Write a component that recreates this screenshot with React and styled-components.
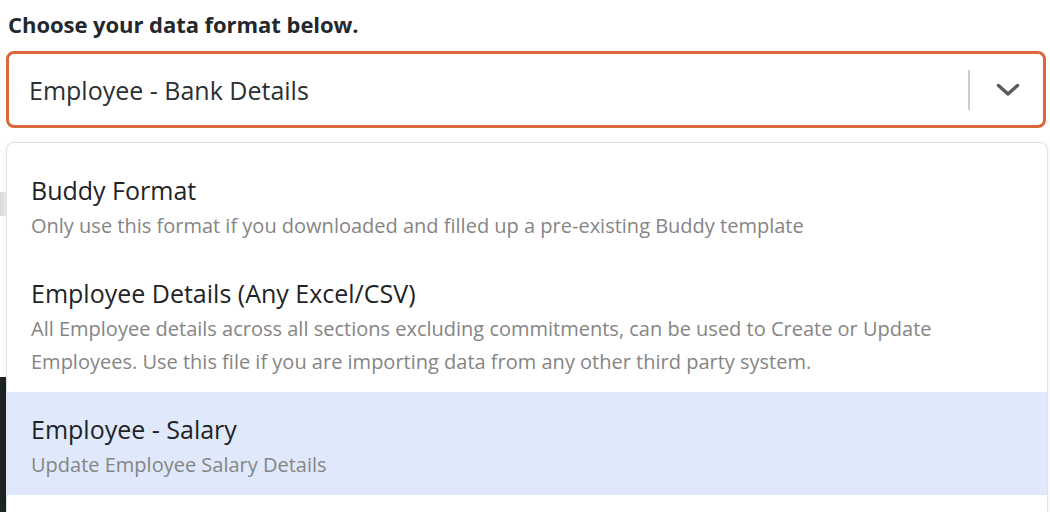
import React from 'react'
import styled, { createGlobalStyle } from 'styled-components'

const GlobalStyle = createGlobalStyle`
  html, body {
    margin: 0;
    padding: 0;
  }
  body {
    font-family: "Open Sans", "Noto Sans", sans-serif;
    background:
      linear-gradient(#1e2326, #1e2326) 0 377px / 6px 200px no-repeat,
      linear-gradient(90deg, #d9d9d9, #ededed) 0 192px / 6px 24px no-repeat,
      #fff;
    width: 1050px;
    height: 512px;
    overflow: hidden;
  }
`

const options = [
  {
    title: 'Buddy Format',
    desc: ['Only use this format if you downloaded and filled up a pre-existing Buddy template'],
  },
  {
    title: 'Employee Details (Any Excel/CSV)',
    desc: [
      'All Employee details across all sections excluding commitments, can be used to Create or Update',
      'Employees. Use this file if you are importing data from any other third party system.',
    ],
  },
  {
    title: 'Employee - Salary',
    desc: ['Update Employee Salary Details'],
    active: true,
  },
  {
    title: 'Employee - Bank Details',
    desc: ['Update Employee Bank Details'],
  },
]

const App = () => {
  return (
    <Page>
      <GlobalStyle />
      <Label>Choose your data format below.</Label>
      <Select>
        <Value>Employee - Bank Details</Value>
        <Indicators>
          <Separator />
          <Chevron viewBox="0 0 24 14">
            <path d="M2.5 2.5 L12 11 L21.5 2.5" />
          </Chevron>
        </Indicators>
      </Select>
      <Menu>
        {options.map((o) => (
          <Option key={o.title} active={o.active}>
            <OptionTitle>{o.title}</OptionTitle>
            <OptionDesc>
              {o.desc.map((line) => (
                <div key={line}>{line}</div>
              ))}
            </OptionDesc>
          </Option>
        ))}
      </Menu>
      <Scrollbar />
    </Page>
  )
}

const Page = styled.div`
  position: relative;
  padding: 10px 0 0 6px;
  width: 1042px;
  height: 502px;
  display: flex;
  flex-direction: column;
`

const Label = styled.div`
  font-weight: 700;
  font-size: 22px;
  line-height: 28px;
  letter-spacing: -0.05px;
  color: #24282c;
  padding-left: 2px;
  margin-bottom: 13px;
`

const Select = styled.div`
  flex: none;
  display: flex;
  align-items: center;
  height: 71px;
  border: 3px solid #d9693a;
  border-radius: 8px;
  padding-left: 20px;
  width: 1014px;
`

const Value = styled.div`
  flex: 1;
  font-size: 25px;
  color: #2b2f33;
`

const Indicators = styled.div`
  display: flex;
  align-items: center;
  height: 100%;
`

const Separator = styled.div`
  width: 2px;
  height: 40px;
  background: #cccccc;
  margin-right: 26px;
`

const Chevron = styled.svg`
  width: 24px;
  height: 14px;
  margin-right: 23px;
  fill: none;
  stroke: #5a5a5a;
  stroke-width: 3.4;
  stroke-linecap: round;
  stroke-linejoin: round;
`

const Menu = styled.div`
  flex: 1;
  min-height: 0;
  margin-top: 14px;
  border: 1px solid #e2e2e2;
  border-bottom: none;
  border-radius: 8px 8px 0 0;
  box-shadow: 0 2px 6px rgba(0, 0, 0, 0.06);
  padding-top: 10px;
  background: #fff;
  overflow: hidden;
`

const Option = styled.div`
  padding: 20px 24px 14px 24px;
  background: ${(p) => (p.active ? '#dfe9fb' : '#fff')};
`

const OptionTitle = styled.div`
  font-size: 25px;
  line-height: 34px;
  color: #1f2327;
`

const OptionDesc = styled.div`
  margin-top: 2px;
  font-size: 20px;
  line-height: 33px;
  color: #858585;
`

const Scrollbar = styled.div`
  position: absolute;
  right: -6px;
  top: 377px;
  width: 2px;
  height: 135px;
  background: #8a8a8a;
`

export default App
